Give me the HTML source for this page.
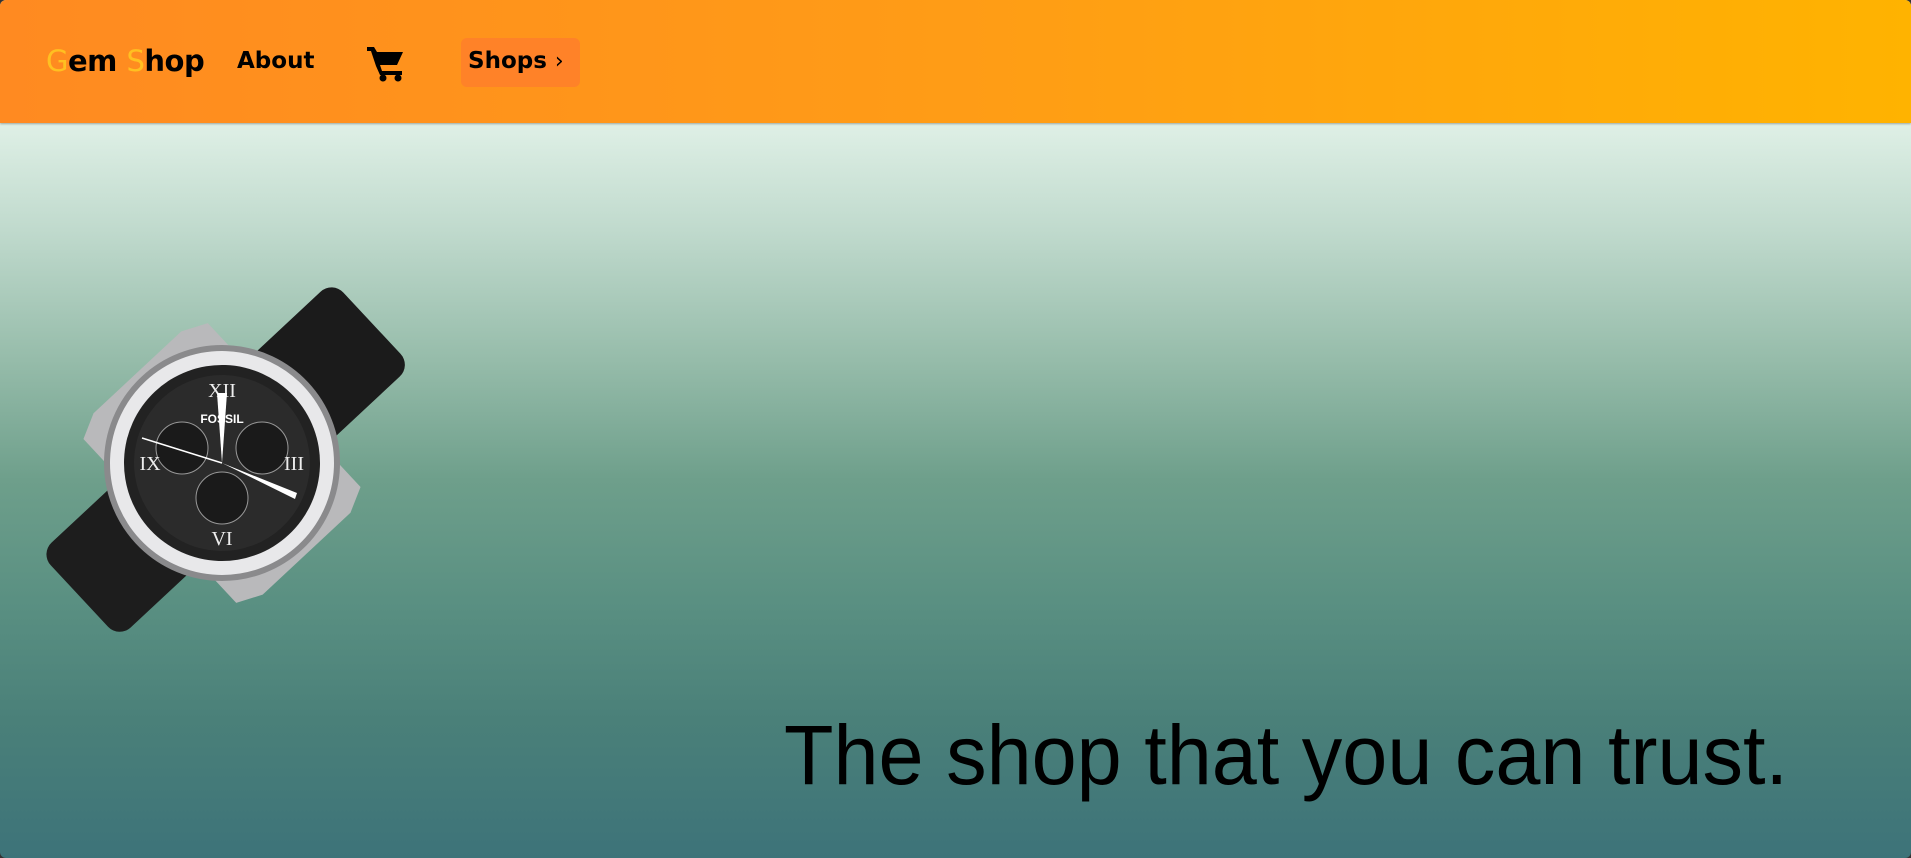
<!DOCTYPE html>
<html><head><meta charset="utf-8"><style>
html,body{margin:0;padding:0;width:1911px;height:858px;overflow:hidden;background:#333;}
.wrap{position:absolute;left:0;top:0;width:1911px;height:858px;border-radius:6px;overflow:hidden;
background:linear-gradient(to bottom,#dff0e6 123px,#c0dacd 230px,#96bcaa 360px,#6e9f8b 480px,#5a9082 600px,#4a8079 720px,#3d7379 858px);}
.hdr{position:absolute;left:0;top:0;width:1911px;height:123px;background:linear-gradient(to right,#ff8a21,#ff9c16 50%,#ffb300);box-shadow:0 1px 2px rgba(0,0,0,.3);}
.t{position:absolute;font-family:"DejaVu Sans","Liberation Sans",sans-serif;font-weight:bold;color:#000;}
.logo{left:46px;top:44px;font-size:29px;letter-spacing:-0.5px}
.logo span{color:#ffc021;font-weight:normal}
.about{left:237px;top:48px;font-size:23px}
.shops{left:461px;top:38px;width:119px;height:49px;border-radius:6px;background:#ff8228;}
.shops div{position:absolute;left:7px;top:10px;font-size:23px}
</style></head><body><div class="wrap">
<div class="hdr">
<div class="t logo"><span>G</span>em <span>S</span>hop</div>
<div class="t about">About</div>
<svg style="position:absolute;left:366px;top:44px" width="42" height="38" viewBox="0 0 42 38">
<path d="M1 3h7l3 5h26l-6 13H14l2 6h20v4H14l-4-9L5 7H1z" fill="#000"/>
<circle cx="17" cy="34" r="3.5" fill="#000"/><circle cx="32" cy="34" r="3.5" fill="#000"/></svg>
<div class="t shops"><div>Shops <span style="font-weight:normal;font-size:22px">&#8250;</span></div></div>
</div>
<svg style="position:absolute;left:0;top:260px" width="460" height="420" viewBox="0 0 460 420">
<g transform="translate(222,203) rotate(47)">
<rect x="-58" y="-205" width="116" height="130" rx="16" fill="#1b1b1b"/>
<rect x="-58" y="75" width="116" height="120" rx="16" fill="#1d1d1d"/>
<path d="M-112-85h224l12 25v120l-12 25h-224l-12-25v-120z" fill="#b9b9bb"/>
<circle r="115" fill="#e8e8ea"/>
<circle r="115" fill="none" stroke="#8a8a8c" stroke-width="6"/>
<circle r="98" fill="#222"/>
<circle r="88" fill="#2b2b2b"/>
<g transform="rotate(-47)">
<circle cx="-40" cy="-15" r="26" fill="#1a1a1a" stroke="#999" stroke-width="1"/>
<circle cx="40" cy="-15" r="26" fill="#1a1a1a" stroke="#999" stroke-width="1"/>
<circle cx="0" cy="35" r="26" fill="#1a1a1a" stroke="#999" stroke-width="1"/>
<g fill="#eee" font-family="Liberation Serif,serif" font-size="20" text-anchor="middle">
<text x="0" y="-66">XII</text><text x="0" y="82">VI</text><text x="72" y="7">III</text><text x="-72" y="7">IX</text></g>
<text x="0" y="-40" fill="#fff" font-family="Liberation Sans,sans-serif" font-weight="bold" font-size="12" text-anchor="middle">FOSSIL</text>
<path d="M0 0L-5-70L5-70z" fill="#fff"/><path d="M0 0L75 30L73 36z" fill="#fff"/>
<line x1="0" y1="0" x2="-80" y2="-25" stroke="#fff" stroke-width="1.5"/>
</g>
</g></svg>
<svg style="position:absolute;left:0;top:0" width="1911" height="858">
<text x="784" y="784" textLength="1004" lengthAdjust="spacingAndGlyphs" font-family="Liberation Sans,sans-serif" font-size="84" fill="#000">The shop that you can trust.</text>
</svg>
</div></body></html>
